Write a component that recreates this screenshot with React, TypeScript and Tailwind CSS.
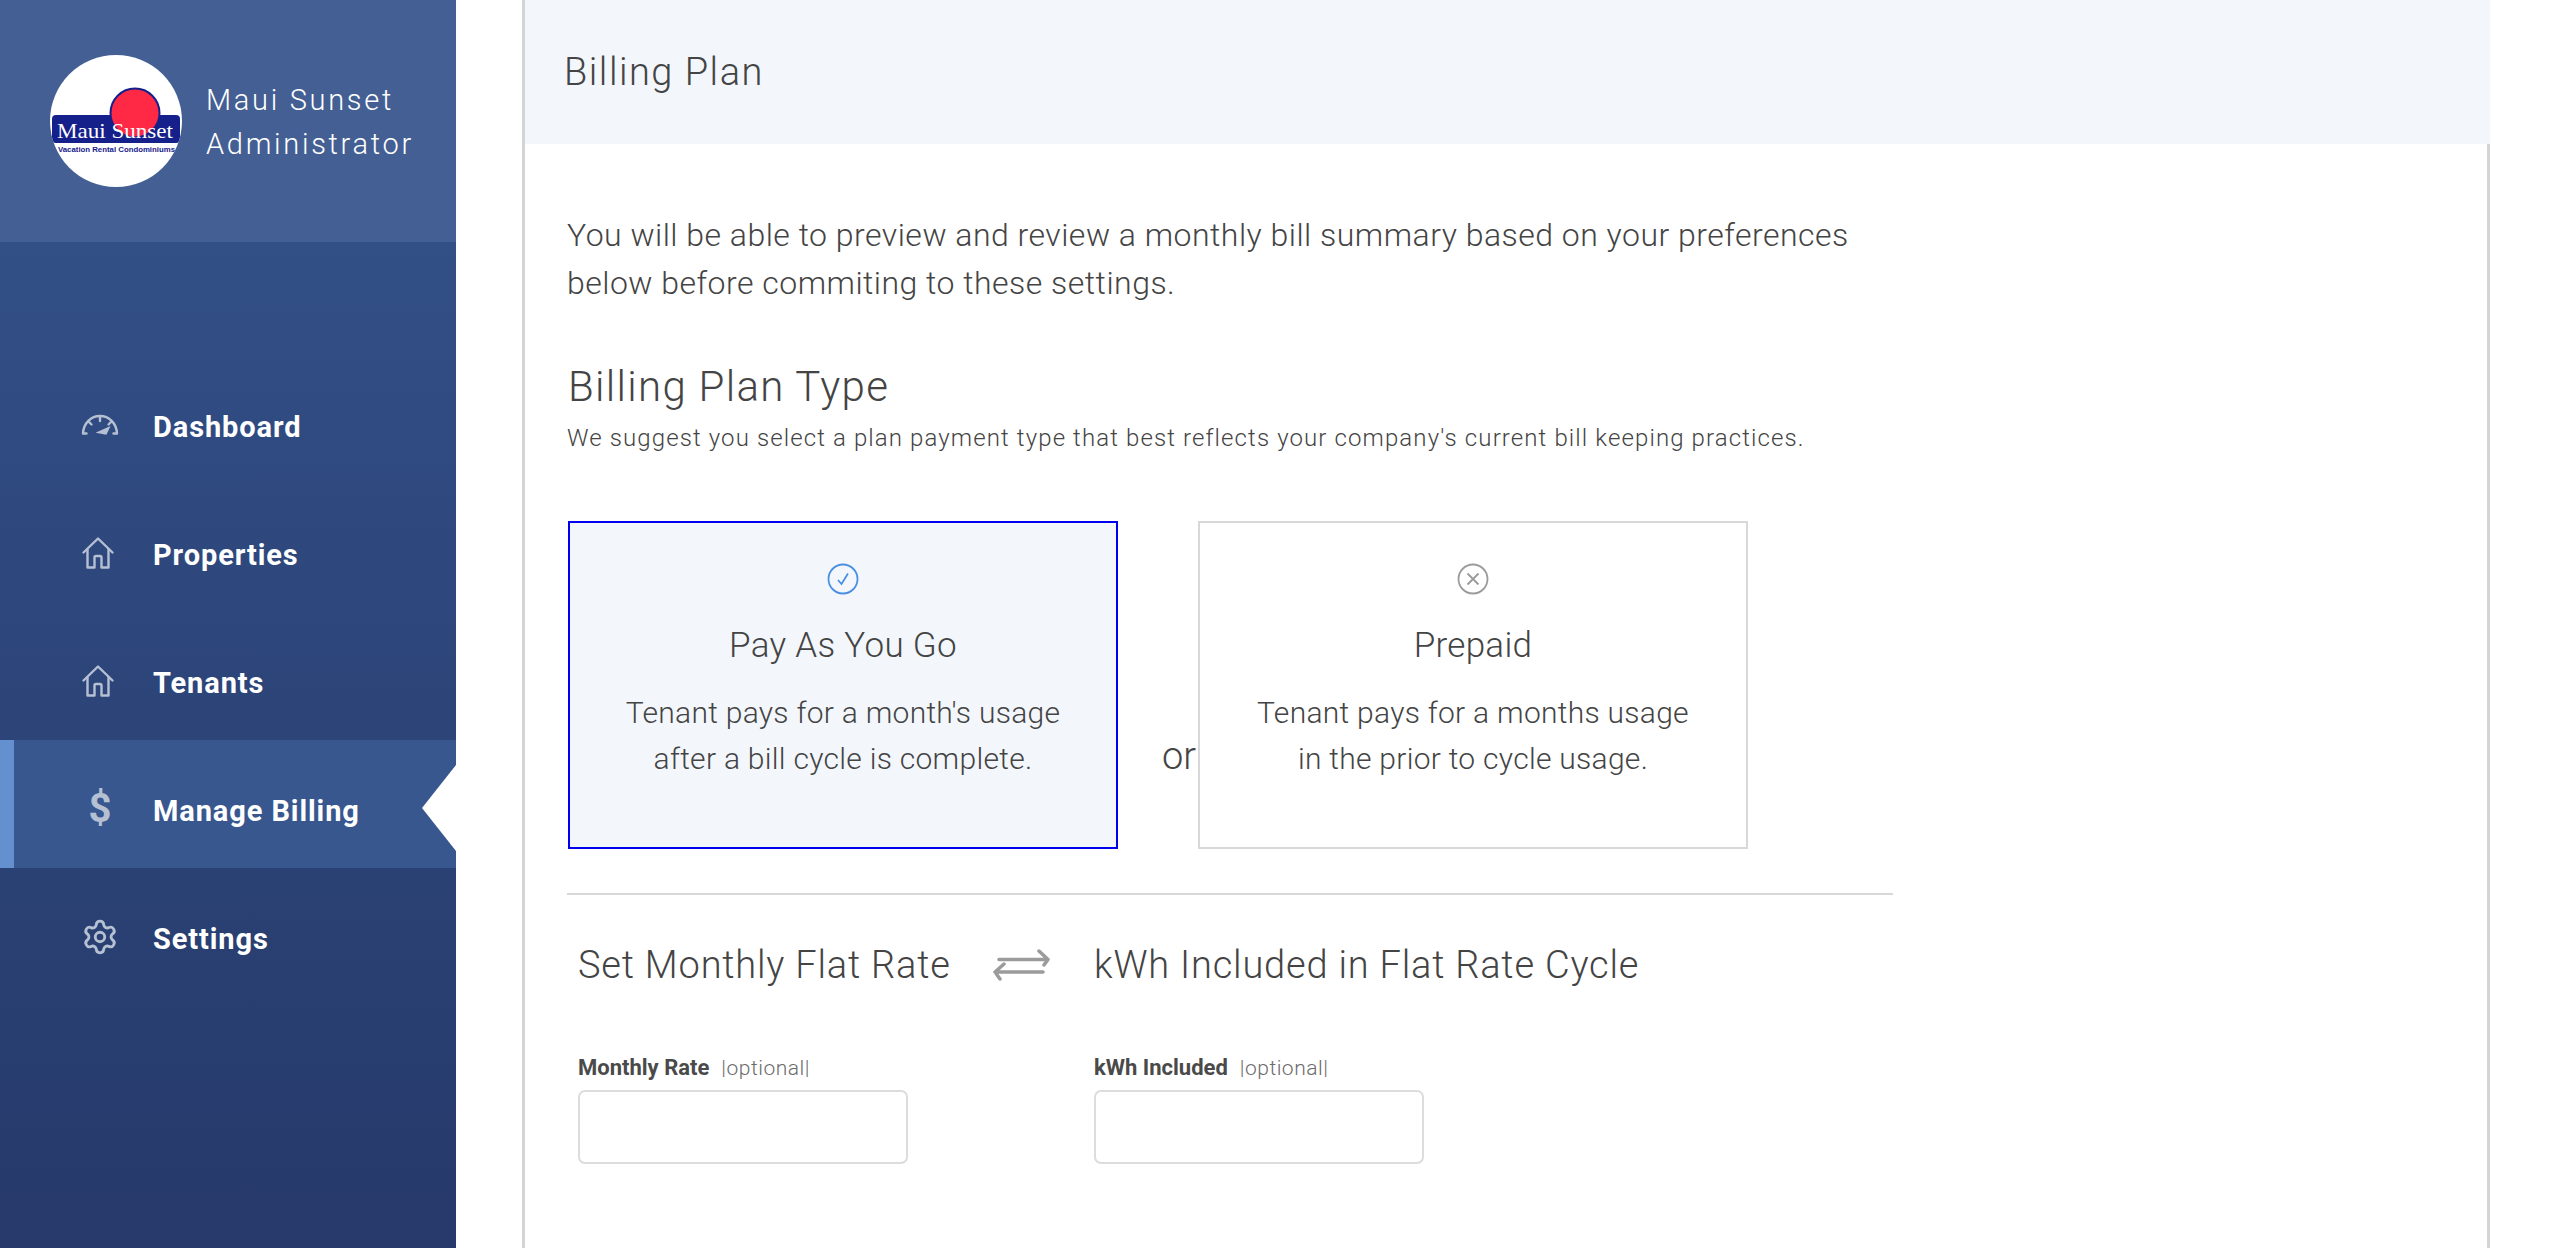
import React from "react";
import { Settings } from "lucide-react";

function Gauge() {
  return (
    <svg width="38" height="22" viewBox="0 0 38 22" fill="none" stroke="#b6c0d3" strokeWidth="2.4" strokeLinecap="round">
      <path d="M2 19.500h3.500M2 19.500C2.500 9 10 2 19 2s16.500 7 17 17.500M36 19.500h-3.500" />
      <path d="M19 2.500v4.500M7.500 7.500l3 3M30.500 7.500l-3 3" />
      <path d="M17 18.500l11-5-3 6.500z" fill="#b6c0d3" strokeWidth="1.500" />
    </svg>
  );
}

function House() {
  return (
    <svg width="32" height="32" viewBox="0 0 32 32" fill="none" stroke="#b6c0d3" strokeWidth="2.400" strokeLinejoin="round" strokeLinecap="round" className="-ml-[5px]">
      <path d="M1.500 15.500L16 1.500l14.500 14" />
      <path d="M5.500 12.500V30.500h7V20.500q0-1.500 1.500-1.500h4q1.500 0 1.500 1.500V30.500h7V12.500" />
    </svg>
  );
}

function Logo() {
  return (
    <div className="w-[132px] h-[132px] rounded-full bg-white overflow-hidden shrink-0">
      <svg width="132" height="132" viewBox="0 0 132 132">
        <rect x="2" y="60" width="128" height="28" rx="4" fill="#16208a" />
        <circle cx="85" cy="58" r="24.500" fill="#ff2845" stroke="#16208a" strokeWidth="2" />
        <text x="7" y="83" fontFamily="'Liberation Serif', serif" fontSize="21" fill="#ffffff" textLength="116" lengthAdjust="spacingAndGlyphs">Maui Sunset</text>
        <text x="8" y="97" fontFamily="'Liberation Sans', sans-serif" fontSize="8" fontWeight="700" fill="#16208a" textLength="117" lengthAdjust="spacingAndGlyphs">Vacation Rental Condominiums</text>
      </svg>
    </div>
  );
}

function NavItem({ icon, label, active }: { icon: React.ReactNode; label: string; active?: boolean }) {
  return (
    <div className={`relative flex items-center h-[128px] ${active ? "bg-[#38578f]" : ""}`}>
      {active && <div className="w-[14px] h-full bg-[#6490cf] absolute left-0 top-0" />}
      <div className="w-[153px] pl-[80px] pt-[10px] flex items-center shrink-0">
        <div className="w-[40px] flex justify-center">{icon}</div>
      </div>
      <span className="pt-[15px] text-white font-bold text-[29px] tracking-[0.900px]">{label}</span>
      {active && (
        <svg className="absolute right-0 top-[25px]" width="34" height="86" viewBox="0 0 34 86">
          <path d="M34 0L0 43l34 43z" fill="#ffffff" />
        </svg>
      )}
    </div>
  );
}

function PlanCard({ selected, title, lines }: { selected?: boolean; title: string; lines: string[] }) {
  return (
    <div className={`relative z-10 w-[550px] h-[328px] flex flex-col items-center border-2 pt-[40px] ${selected ? "border-[#0000ee] bg-[#f3f7fc]" : "border-[#d8d8d8] bg-white"}`}>
      {selected ? (
        <svg width="32" height="32" viewBox="0 0 32 32" fill="none" stroke="#4a90e2" strokeWidth="1.800">
          <circle cx="16" cy="16" r="14.500" />
          <path d="M11 17l3.500 4L21 10.500" />
        </svg>
      ) : (
        <svg width="32" height="32" viewBox="0 0 32 32" fill="none" stroke="#9b9b9b" strokeWidth="1.800">
          <circle cx="16" cy="16" r="14.500" />
          <path d="M10.500 10.500l11 11M21.500 10.500l-11 11" />
        </svg>
      )}
      <div className="text-[35px] font-light tracking-[0.300px] text-[#444444] leading-[44px] mt-[29px]">{title}</div>
      <div className="mt-[22px] text-center text-[30px] font-light tracking-[0.280px] text-[#444444] leading-[46px]">
        {lines.map((l) => (
          <div key={l}>{l}</div>
        ))}
      </div>
    </div>
  );
}

function Field({ label }: { label: string }) {
  return (
    <div className="w-[330px]">
      <div className="flex items-baseline gap-[12px] h-[28px] leading-[28px] whitespace-nowrap">
        <span className="font-bold text-[22px] text-[#4a4a4a]">{label}</span>
        <span className="font-light text-[21px] text-[#6b6b6b] tracking-[0.500px]">|optional|</span>
      </div>
      <input className="mt-[8px] block w-[330px] h-[74px] bg-white border-2 border-[#dcdcdc] rounded-[7px]" />
    </div>
  );
}

export default function App() {
  return (
    <div className="flex h-screen overflow-hidden bg-white font-['Roboto',sans-serif] text-[#444444]">
      <aside className="w-[456px] shrink-0 flex flex-col">
        <div className="h-[242px] bg-[#445f94] flex items-center pl-[50px] gap-[24px] shrink-0">
          <Logo />
          <div className="text-white font-light text-[29px] tracking-[2.700px] leading-[44px] mt-[2px]">
            <div>Maui Sunset</div>
            <div>Administrator</div>
          </div>
        </div>
        <nav className="flex-1 bg-gradient-to-b from-[#324f86] to-[#26396a] pt-[114px]">
          <NavItem icon={<Gauge />} label="Dashboard" />
          <NavItem icon={<House />} label="Properties" />
          <NavItem icon={<House />} label="Tenants" />
          <NavItem active icon={<span className="text-[#b6c0d3] font-bold text-[40px] leading-none">$</span>} label="Manage Billing" />
          <NavItem icon={<Settings size={38} strokeWidth={1.800} className="text-[#b6c0d3]" />} label="Settings" />
        </nav>
      </aside>

      <main className="ml-[66px] w-[1968px] h-full border-x-[3px] border-[#d4d4d4] shrink-0">
        <div className="h-[144px] bg-[#f3f7fc] flex items-center pl-[39px] text-[38px] font-light tracking-[1.500px] -mr-[3px]">
          Billing Plan
        </div>
        <div className="pl-[42px] w-[1368px]">
          <p className="mt-[67px] text-[32px] font-light tracking-[0.480px] leading-[48px]">
            You will be able to preview and review a monthly bill summary based on your preferences
            <br />
            below before commiting to these settings.
          </p>
          <h2 className="mt-[52px] ml-[1px] text-[42px] font-light tracking-[1.300px] leading-[56px]">Billing Plan Type</h2>
          <p className="mt-[7px] text-[24px] font-light tracking-[1.110px] leading-[32px]">
            We suggest you select a plan payment type that best reflects your company's current bill keeping practices.
          </p>
          <div className="flex mt-[67px] ml-[1px] items-stretch">
            <PlanCard selected title="Pay As You Go" lines={["Tenant pays for a month's usage", "after a bill cycle is complete."]} />
            <div className="w-[80px] pl-[44px] flex items-center pt-[142px] text-[38px] font-light">or</div>
            <PlanCard title="Prepaid" lines={["Tenant pays for a months usage", "in the prior to cycle usage."]} />
          </div>
          <div className="mt-[44px] h-[2px] w-[1326px] bg-[#d8d8d8]" />
          <div className="flex items-center mt-[44px] pl-[11px] h-[52px] text-[38px] font-light tracking-[0.800px] whitespace-nowrap">
            <span className="w-[414px]">Set Monthly Flat Rate</span>
            <svg className="w-[58px] h-[32px] mr-[44px]" viewBox="0 0 58 32" fill="none" stroke="#9b9b9b" strokeWidth="3.500" strokeLinecap="round" strokeLinejoin="round">
              <path d="M7 10.500h49M47 2l9 8.500L52 16" />
              <path d="M51 23H3M12 15l-9 8 5 7" />
            </svg>
            <span>kWh Included in Flat Rate Cycle</span>
          </div>
          <div className="flex gap-[186px] mt-[63px] pl-[11px]">
            <Field label="Monthly Rate" />
            <Field label="kWh Included" />
          </div>
        </div>
      </main>
    </div>
  );
}
